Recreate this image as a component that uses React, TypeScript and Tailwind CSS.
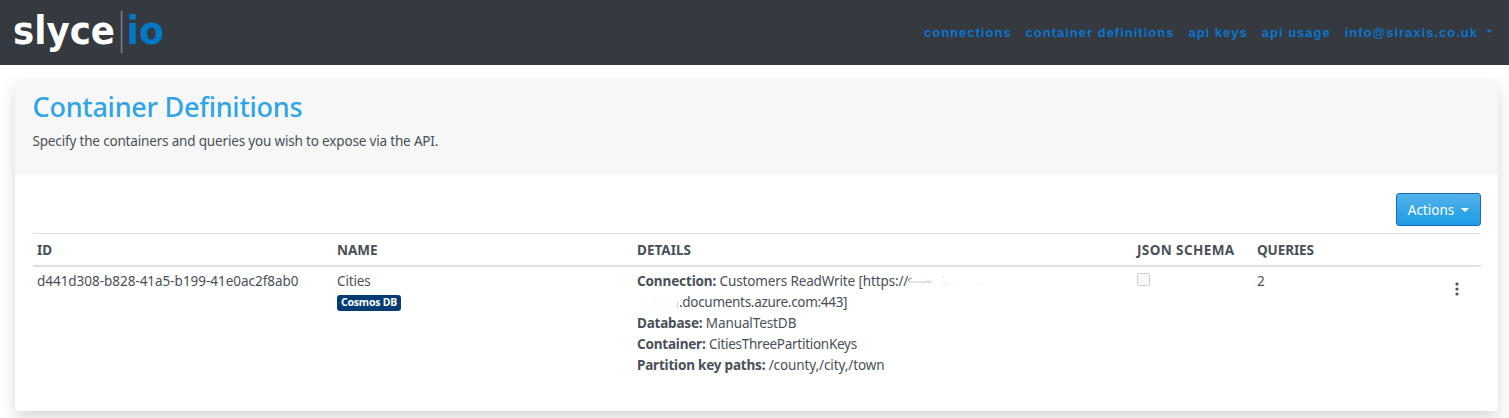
import type { ReactNode } from "react";

const navLinks = ["connections", "container definitions", "api keys", "api usage"];

function Logo() {
  return (
    <svg width="170" height="65" viewBox="0 0 170 65" role="img" aria-label="slyce io" className="block">
      <text x="13" y="44" textLength="102" lengthAdjust="spacingAndGlyphs" fontFamily="'DejaVu Sans', sans-serif" fontSize="39" fontWeight="700" fill="#ffffff">
        slyce
      </text>
      <rect x="120.8" y="11" width="1.5" height="42" fill="#77828c" />
      <text x="126.5" y="44" textLength="37.5" lengthAdjust="spacingAndGlyphs" fontFamily="'DejaVu Sans', sans-serif" fontSize="39" fontWeight="700" fill="#0078c8">
        io
      </text>
    </svg>
  );
}

function Caret({ className }: { className: string }) {
  return <span className={`inline-block h-0 w-0 border-x-transparent border-b-0 ${className}`} />;
}

function Detail({ label, children }: { label: string; children: ReactNode }) {
  return (
    <div>
      <b className="font-bold tracking-[-0.2px]">{label}</b> {children}
    </div>
  );
}

export default function App() {
  return (
    <div className="h-[418px] overflow-hidden bg-white font-['Noto_Sans',sans-serif] text-[13.5px] leading-[21px] text-[#495057]">
      <header className="flex h-[65px] items-center justify-between bg-[#343a40]">
        <Logo />
        <nav className="flex items-center gap-[14px] pr-[17px] font-['Liberation_Sans',sans-serif] text-[13px] font-bold tracking-[1px] whitespace-nowrap text-[#0b75cf]">
          {navLinks.map((label) => (
            <a key={label}>{label}</a>
          ))}
          <a className="flex items-center">
            info@siraxis.co.uk
            <Caret className="-mt-[2px] ml-[8px] border-x-[3px] border-t-[3px] border-t-current" />
          </a>
        </nav>
      </header>

      <main className="mt-[14px] mr-[11px] ml-[15px] h-[332px] rounded-[4px] bg-white shadow-[0_8px_16px_rgba(0,0,0,0.15)]">
        <div className="h-[96px] rounded-t-[4px] bg-[#f7f7f7] pt-[11px] pl-[17.5px]">
          <h1 className="text-[27px] leading-[34px] font-medium tracking-[-0.25px] text-[#2fa4e7]">Container Definitions</h1>
          <p className="mt-[7px] tracking-[-0.17px]">Specify the containers and queries you wish to expose via the API.</p>
        </div>

        <div className="pt-[18px] pr-[17px] pl-[18px]">
          <div className="flex justify-end">
            <button className="flex h-[33px] w-[85px] items-center justify-center rounded-[3px] border border-[#1967be] bg-linear-to-b from-[#54b4eb] via-[#2fa4e7] via-60% to-[#1d9ce5] pt-[1px] text-white">
              Actions
              <Caret className="ml-[7px] border-x-[4px] border-t-[4px] border-t-white" />
            </button>
          </div>

          <table className="mt-[7px] w-full table-fixed border-t border-[#dee2e6] text-left">
            <colgroup>
              <col className="w-[300px]" />
              <col className="w-[300px]" />
              <col className="w-[500px]" />
              <col className="w-[120px]" />
              <col className="w-[180px]" />
              <col />
            </colgroup>
            <thead>
              <tr className="h-[32px] border-b-2 border-[#dee2e6] *:px-1 *:pt-[2px] *:font-bold *:whitespace-nowrap">
                <th>ID</th>
                <th>NAME</th>
                <th>DETAILS</th>
                <th className="tracking-[0.4px]">JSON SCHEMA</th>
                <th className="tracking-[-0.1px]">QUERIES</th>
                <th />
              </tr>
            </thead>
            <tbody>
              <tr className="align-top *:px-1 *:pt-[4px]">
                <td className="tracking-[-0.03px]">d441d308-b828-41a5-b199-41e0ac2f8ab0</td>
                <td className="tracking-[-0.15px]">
                  <div>Cities</div>
                  <div className="mt-[3px] flex h-[16px] w-[64px] items-center justify-center rounded-[3px] bg-[#033c73] text-[10.5px] leading-none font-bold tracking-[-0.2px] text-white">
                    Cosmos DB
                  </div>
                </td>
                <td className="tracking-[-0.1px]">
                  <div className="flex">
                    <span className="tracking-[-0.13px]">
                      <b className="font-bold">Connection:</b> Customers ReadWrite [https://
                    </span>
                    <svg width="80" height="21" viewBox="0 0 80 21" fill="none" aria-hidden="true">
                      <path d="M3.5 7.5Q0 7 .5 9.5L2 11" stroke="#7d8287" />
                      <path d="M3 11H24" stroke="#e0e3e6" strokeWidth="2" />
                      <path d="M19 9l2 1M35 6h1" stroke="#c8ccd0" />
                      <path d="M34 15l8-2M48 14v-2M69 12l5 1" stroke="#f5f6f7" strokeWidth="2" />
                    </svg>
                  </div>
                  <div className="flex">
                    <svg width="42" height="21" viewBox="0 0 42 21" fill="none" aria-hidden="true">
                      <path d="M2 6h8M2 13l7-2M14 7l8 3M16 15l10-1M28 10l10-2M29 14h10" stroke="#fafafa" strokeWidth="1.5" />
                      <path d="M40.5 10v6" stroke="#b9dcf3" />
                    </svg>
                    <span className="tracking-[-0.3px]">.documents.azure.com:443]</span>
                  </div>
                  <Detail label="Database:">ManualTestDB</Detail>
                  <Detail label="Container:">
                    <span className="tracking-[-0.27px]">CitiesThreePartitionKeys</span>
                  </Detail>
                  <Detail label="Partition key paths:">/county,/city,/town</Detail>
                </td>
                <td>
                  <input type="checkbox" disabled aria-label="JSON schema" className="mt-[2px] block h-[13px] w-[13px] appearance-none rounded-[2px] border border-[#cfcfcf] bg-[#f8f8f8]" />
                </td>
                <td>2</td>
                <td>
                  <svg width="4" height="14" viewBox="0 0 4 14" fill="#495057" className="mt-[11px] ml-[18px]" aria-label="Row actions">
                    <circle cx="2" cy="2" r="1.6" />
                    <circle cx="2" cy="7" r="1.6" />
                    <circle cx="2" cy="12" r="1.6" />
                  </svg>
                </td>
              </tr>
            </tbody>
          </table>
        </div>
      </main>
    </div>
  );
}
